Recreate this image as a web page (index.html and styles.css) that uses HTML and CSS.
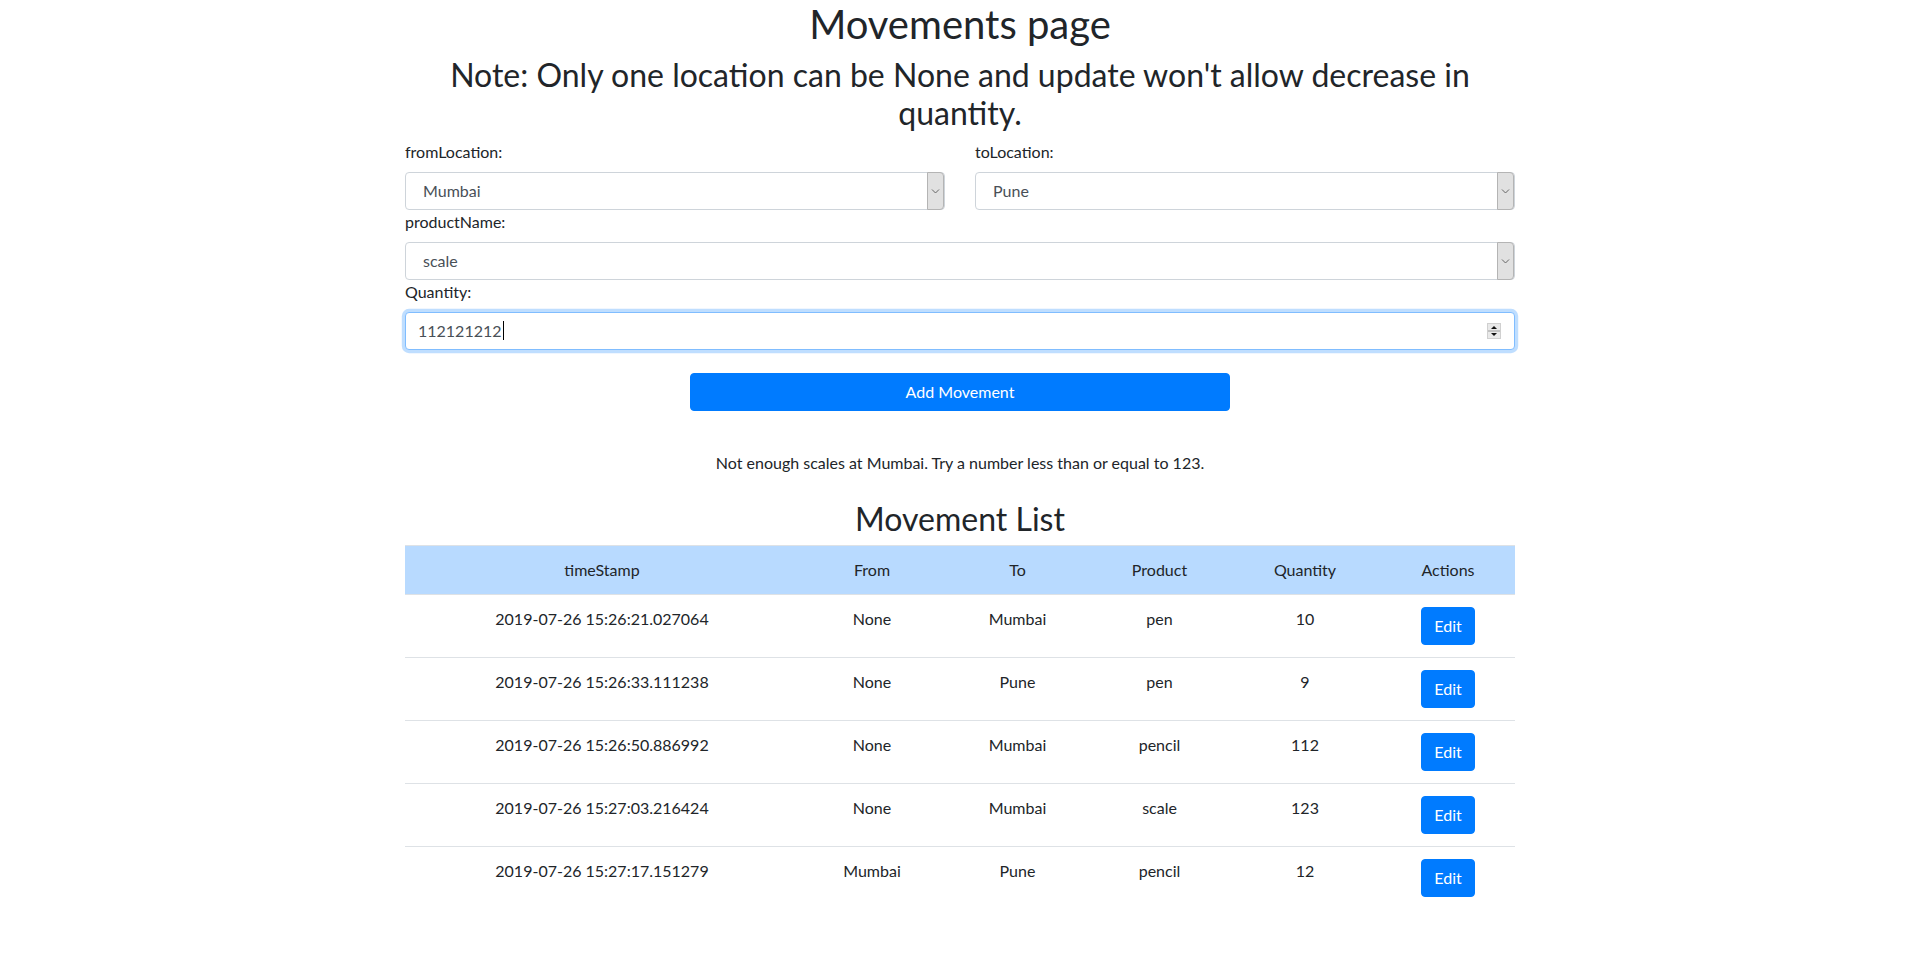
FILE: index.html
```html
<!DOCTYPE html>
<html lang="en">
<head>
<meta charset="utf-8">
<title>Movements page</title>
<link rel="stylesheet" href="styles.css">
</head>
<body>
<div class="container">
  <h1 class="page-title">Movements page</h1>
  <h2 class="note">Note: Only one location can be None and update won't allow decrease in quantity.</h2>

  <form class="movement-form">
    <div class="form-row">
      <div class="form-col">
        <label class="field-label" for="fromLocation">fromLocation:</label>
        <div class="select-wrap">
          <select id="fromLocation" class="form-control select-control">
            <option>Mumbai</option>
          </select>
          <span class="select-arrow"><svg width="9" height="6" viewBox="0 0 9 6"><path d="M1 1.5 L4.5 5 L8 1.5" fill="none" stroke="#666" stroke-width="1"/></svg></span>
        </div>
      </div>
      <div class="form-col">
        <label class="field-label" for="toLocation">toLocation:</label>
        <div class="select-wrap">
          <select id="toLocation" class="form-control select-control">
            <option>Pune</option>
          </select>
          <span class="select-arrow"><svg width="9" height="6" viewBox="0 0 9 6"><path d="M1 1.5 L4.5 5 L8 1.5" fill="none" stroke="#666" stroke-width="1"/></svg></span>
        </div>
      </div>
    </div>

    <div class="form-group">
      <label class="field-label" for="productName">productName:</label>
      <div class="select-wrap">
        <select id="productName" class="form-control select-control">
          <option>scale</option>
        </select>
        <span class="select-arrow"><svg width="9" height="6" viewBox="0 0 9 6"><path d="M1 1.5 L4.5 5 L8 1.5" fill="none" stroke="#666" stroke-width="1"/></svg></span>
      </div>
    </div>

    <div class="form-group">
      <label class="field-label">Quantity:</label>
      <div class="form-control number-control">
        <span class="number-value">112121212</span><span class="caret"></span>
        <span class="spinner"><svg width="14" height="16" viewBox="0 0 14 16">
          <rect x="0.5" y="0.5" width="13" height="15" fill="#e9e9e9" stroke="#d0d0d0"/>
          <line x1="1" y1="8" x2="13" y2="8" stroke="#9a9a9a" stroke-width="1"/>
          <path d="M4 6 L7 3 L10 6 Z" fill="#111"/>
          <path d="M4 10 L10 10 L7 13 Z" fill="#111"/>
        </svg></span>
      </div>
    </div>

    <div class="form-actions">
      <button type="button" class="btn btn-primary btn-add">Add Movement</button>
    </div>
  </form>

  <p class="message">Not enough scales at Mumbai. Try a number less than or equal to 123.</p>

  <h2 class="list-title">Movement List</h2>

  <table class="table">
    <colgroup>
      <col class="c-time"><col class="c-from"><col class="c-to"><col class="c-prod"><col class="c-qty"><col class="c-act">
    </colgroup>
    <thead>
      <tr><th>timeStamp</th><th>From</th><th>To</th><th>Product</th><th>Quantity</th><th>Actions</th></tr>
    </thead>
    <tbody>
      <tr><td>2019-07-26 15:26:21.027064</td><td>None</td><td>Mumbai</td><td>pen</td><td>10</td><td><button type="button" class="btn btn-primary">Edit</button></td></tr>
      <tr><td>2019-07-26 15:26:33.111238</td><td>None</td><td>Pune</td><td>pen</td><td>9</td><td><button type="button" class="btn btn-primary">Edit</button></td></tr>
      <tr><td>2019-07-26 15:26:50.886992</td><td>None</td><td>Mumbai</td><td>pencil</td><td>112</td><td><button type="button" class="btn btn-primary">Edit</button></td></tr>
      <tr><td>2019-07-26 15:27:03.216424</td><td>None</td><td>Mumbai</td><td>scale</td><td>123</td><td><button type="button" class="btn btn-primary">Edit</button></td></tr>
      <tr><td>2019-07-26 15:27:17.151279</td><td>Mumbai</td><td>Pune</td><td>pencil</td><td>12</td><td><button type="button" class="btn btn-primary">Edit</button></td></tr>
    </tbody>
  </table>
</div>
</body>
</html>
```

FILE: styles.css
```css
* { box-sizing: border-box; }

html, body {
  margin: 0;
  padding: 0;
  background: #fff;
}

body {
  font-family: "Segoe UI", Lato, "Noto Sans", sans-serif;
  font-size: 16px;
  line-height: 1.5;
  color: #212529;
}

.container {
  width: 1140px;
  padding: 0 15px;
  margin: 0 auto;
}

.page-title {
  margin: 0 0 8px;
  font-size: 40px;
  font-weight: 400;
  line-height: 1.2;
  text-align: center;
}

.note {
  margin: 0 0 7px;
  font-size: 32px;
  font-weight: 400;
  line-height: 1.2;
  text-align: center;
}

.movement-form { margin: 0; }

.form-row {
  display: flex;
  gap: 30px;
}

.form-col { flex: 1 1 0; }

.form-group { margin: 0; }

.field-label {
  display: block;
  margin-bottom: 8px;
  line-height: 24px;
}

.form-control {
  display: block;
  width: 100%;
  height: 38px;
  padding: 6px 12px;
  font-family: inherit;
  font-size: 16px;
  line-height: 24px;
  color: #495057;
  background: #fff;
  border: 1px solid #ced4da;
  border-radius: 4px;
}

.select-wrap { position: relative; }

.select-control {
  -webkit-appearance: none;
  appearance: none;
  padding-left: 17px;
  outline: none;
}

.select-arrow {
  position: absolute;
  top: 0;
  right: 1px;
  bottom: 0;
  width: 17px;
  display: flex;
  align-items: center;
  justify-content: center;
  background: #e1e1e1;
  border: 1px solid #b4b4b4;
  border-radius: 0 4px 4px 0;
  pointer-events: none;
}

.number-control {
  display: flex;
  align-items: center;
  border-color: #80bdff;
  box-shadow: 0 0 0 3.2px rgba(0, 123, 255, 0.25);
}

.number-value { line-height: 24px; }

.caret {
  width: 1px;
  height: 19px;
  background: #000;
  margin-left: 1px;
}

.spinner {
  margin-left: auto;
  display: flex;
  margin-right: 1px;
}

.form-actions {
  display: flex;
  justify-content: center;
  margin-top: 23px;
}

.btn {
  display: inline-block;
  font-family: inherit;
  font-size: 16px;
  line-height: 24px;
  padding: 6px 12px;
  border: 1px solid transparent;
  border-radius: 4px;
  cursor: pointer;
}

.btn-primary {
  color: #fff;
  background: #007bff;
  border-color: #007bff;
}

.btn-add { width: 540px; }

.message {
  margin: 40px 0 25px;
  text-align: center;
}

.list-title {
  margin: 0 0 7px;
  font-size: 32px;
  font-weight: 400;
  line-height: 1.2;
  text-align: center;
}

.table {
  width: 100%;
  border-collapse: collapse;
  table-layout: fixed;
}

.c-time { width: 394px; }
.c-from { width: 146px; }
.c-to { width: 145px; }
.c-prod { width: 139px; }
.c-qty { width: 152px; }
.c-act { width: 134px; }

.table th,
.table td {
  padding: 12px;
  border-top: 1px solid #dee2e6;
  text-align: center;
  vertical-align: top;
  font-weight: 400;
}

.table th { background: #b8daff; }
```
